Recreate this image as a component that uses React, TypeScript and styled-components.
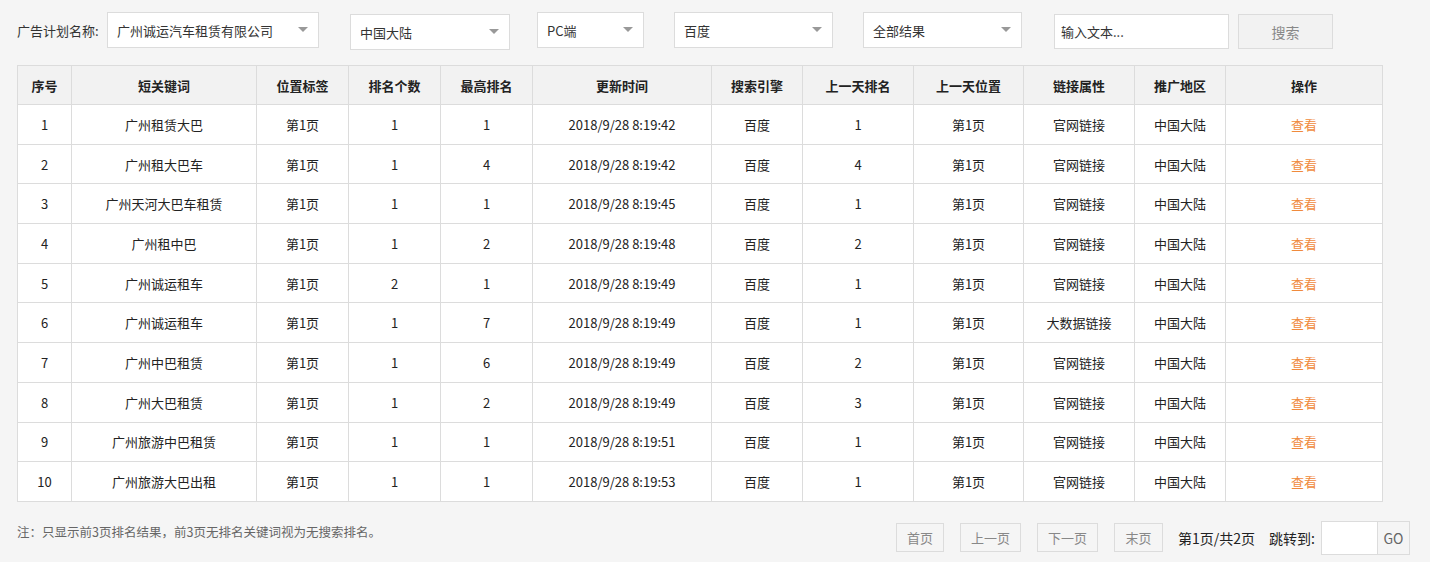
import styled, { createGlobalStyle } from "styled-components";

const GlobalStyle = createGlobalStyle`
  html, body {
    margin: 0;
    padding: 0;
    background: #ffffff;
  }
  body {
    font-family: "Noto Sans CJK SC", "Noto Sans", sans-serif;
    font-size: 13px;
    color: #333;
  }
`;

const Page = styled.div`
  width: 1430px;
  height: 562px;
  background: #f5f5f5;
  padding: 12px 0 0 17px;
  box-sizing: border-box;
  overflow: hidden;
`;

const Toolbar = styled.div`
  display: flex;
  align-items: flex-start;
  height: 53px;
`;

const Label = styled.span`
  margin-top: 9px;
  width: 90px;
  font-size: 13px;
  color: #333;
`;

const Select = styled.div<{ $w: number; $ml: number; $mt?: number }>`
  width: ${({ $w }) => $w}px;
  height: 36px;
  margin-left: ${({ $ml }) => $ml}px;
  margin-top: ${({ $mt }) => $mt ?? 0}px;
  box-sizing: border-box;
  border: 1px solid #dcdcdc;
  background: #fff;
  display: flex;
  align-items: center;
  justify-content: space-between;
  padding: 0 10px 0 9px;
  font-size: 13px;
  color: #333;
`;

const Caret = styled.span`
  width: 0;
  height: 0;
  border-left: 5px solid transparent;
  border-right: 5px solid transparent;
  border-top: 5px solid #999;
  margin-top: -2px;
`;

const TextInput = styled.input`
  width: 175px;
  height: 35px;
  margin-left: 32px;
  margin-top: 2px;
  box-sizing: border-box;
  border: 1px solid #dcdcdc;
  background: #fff;
  padding: 0 6px;
  font-family: inherit;
  font-size: 13px;
  outline: none;
  &::placeholder {
    color: #333;
  }
`;

const SearchButton = styled.button`
  width: 95px;
  height: 35px;
  margin-left: 9px;
  margin-top: 2px;
  border: 1px solid #dcdcdc;
  background: #f2f2f2;
  color: #888;
  font-family: inherit;
  font-size: 14px;
`;

const Table = styled.table`
  border-collapse: collapse;
  table-layout: fixed;
  width: 1365px;
  background: #fff;
  text-align: center;
`;

const Th = styled.th`
  height: 38px;
  border: 1px solid #dcdcdc;
  background: #f2f2f2;
  font-weight: bold;
  font-size: 13px;
  color: #222;
  padding: 0;
`;

const Td = styled.td<{ $link?: boolean }>`
  height: 38.7px;
  border: 1px solid #dcdcdc;
  font-size: 13px;
  color: ${({ $link }) => ($link ? "#f08a3c" : "#222")};
  padding: 0;
`;

const Footer = styled.div`
  display: flex;
  align-items: center;
  margin-top: 19px;
  width: 1393px;
`;

const Note = styled.span`
  font-size: 12.5px;
  color: #666;
  flex: 1;
  align-self: flex-start;
  margin-top: 1px;
`;

const PageButton = styled.button<{ $w: number }>`
  width: ${({ $w }) => $w}px;
  height: 29px;
  margin-right: 16px;
  border: 1px solid #dcdcdc;
  background: #f5f5f5;
  color: #888;
  font-family: inherit;
  font-size: 13px;
  padding: 0;
`;

const PageInfo = styled.span<{ $mr: number }>`
  font-size: 14px;
  color: #222;
  margin-left: -1px;
  margin-right: ${({ $mr }) => $mr}px;
`;

const JumpBox = styled.div`
  display: flex;
  height: 34px;
  border: 1px solid #dcdcdc;
  margin-left: 6px;
  box-sizing: border-box;
`;

const JumpInput = styled.input`
  width: 55px;
  border: none;
  border-right: 1px solid #dcdcdc;
  background: #fff;
  outline: none;
  padding: 0;
`;

const GoButton = styled.button`
  width: 31px;
  border: none;
  background: #f5f5f5;
  color: #666;
  font-family: inherit;
  font-size: 14px;
  padding: 0;
`;

const columns = [
  { title: "序号", w: 54 },
  { title: "短关键词", w: 185 },
  { title: "位置标签", w: 92 },
  { title: "排名个数", w: 92 },
  { title: "最高排名", w: 92 },
  { title: "更新时间", w: 179 },
  { title: "搜索引擎", w: 91 },
  { title: "上一天排名", w: 111 },
  { title: "上一天位置", w: 110 },
  { title: "链接属性", w: 111 },
  { title: "推广地区", w: 91 },
  { title: "操作", w: 157 },
];

const rows: [string, number, number, string, number, string][] = [
  ["广州租赁大巴", 1, 1, "8:19:42", 1, "官网链接"],
  ["广州租大巴车", 1, 4, "8:19:42", 4, "官网链接"],
  ["广州天河大巴车租赁", 1, 1, "8:19:45", 1, "官网链接"],
  ["广州租中巴", 1, 2, "8:19:48", 2, "官网链接"],
  ["广州诚运租车", 2, 1, "8:19:49", 1, "官网链接"],
  ["广州诚运租车", 1, 7, "8:19:49", 1, "大数据链接"],
  ["广州中巴租赁", 1, 6, "8:19:49", 2, "官网链接"],
  ["广州大巴租赁", 1, 2, "8:19:49", 3, "官网链接"],
  ["广州旅游中巴租赁", 1, 1, "8:19:51", 1, "官网链接"],
  ["广州旅游大巴出租", 1, 1, "8:19:53", 1, "官网链接"],
];

export default function App() {
  return (
    <>
      <GlobalStyle />
      <Page>
        <Toolbar>
          <Label>广告计划名称:</Label>
          <Select $w={212} $ml={0}>
            广州诚运汽车租赁有限公司
            <Caret />
          </Select>
          <Select $w={160} $ml={31} $mt={2}>
            中国大陆
            <Caret />
          </Select>
          <Select $w={107} $ml={27}>
            PC端
            <Caret />
          </Select>
          <Select $w={159} $ml={30}>
            百度
            <Caret />
          </Select>
          <Select $w={159} $ml={30}>
            全部结果
            <Caret />
          </Select>
          <TextInput placeholder="输入文本..." />
          <SearchButton>搜索</SearchButton>
        </Toolbar>
        <Table>
          <colgroup>
            {columns.map((c) => (
              <col key={c.title} style={{ width: c.w }} />
            ))}
          </colgroup>
          <thead>
            <tr>
              {columns.map((c) => (
                <Th key={c.title}>{c.title}</Th>
              ))}
            </tr>
          </thead>
          <tbody>
            {rows.map((r, i) => (
              <tr key={i}>
                <Td>{i + 1}</Td>
                <Td>{r[0]}</Td>
                <Td>第1页</Td>
                <Td>{r[1]}</Td>
                <Td>{r[2]}</Td>
                <Td>2018/9/28 {r[3]}</Td>
                <Td>百度</Td>
                <Td>{r[4]}</Td>
                <Td>第1页</Td>
                <Td>{r[5]}</Td>
                <Td>中国大陆</Td>
                <Td $link>查看</Td>
              </tr>
            ))}
          </tbody>
        </Table>
        <Footer>
          <Note>注：只显示前3页排名结果，前3页无排名关键词视为无搜索排名。</Note>
          <PageButton $w={48}>首页</PageButton>
          <PageButton $w={61}>上一页</PageButton>
          <PageButton $w={61}>下一页</PageButton>
          <PageButton $w={49}>末页</PageButton>
          <PageInfo $mr={15}>第1页/共2页</PageInfo>
          <PageInfo $mr={0}>跳转到:</PageInfo>
          <JumpBox>
            <JumpInput />
            <GoButton>GO</GoButton>
          </JumpBox>
        </Footer>
      </Page>
    </>
  );
}
